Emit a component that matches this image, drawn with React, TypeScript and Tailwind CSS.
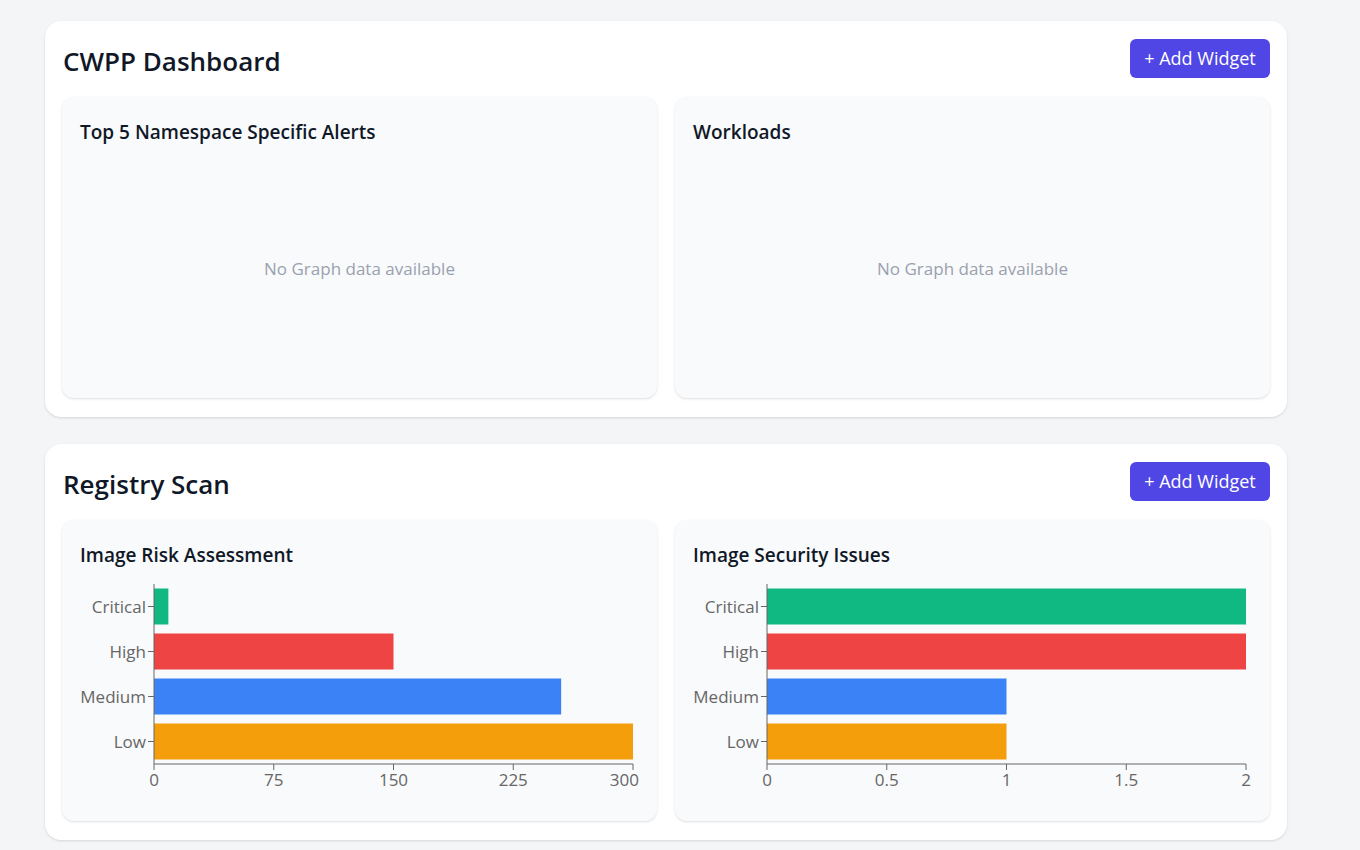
import React from "react";

type Bar = { label: string; value: number; color: string };

const riskData: Bar[] = [
  { label: "Critical", value: 9, color: "#10b981" },
  { label: "High", value: 150, color: "#ef4444" },
  { label: "Medium", value: 255, color: "#3b82f6" },
  { label: "Low", value: 300, color: "#f59e0b" },
];

const issuesData: Bar[] = [
  { label: "Critical", value: 2, color: "#10b981" },
  { label: "High", value: 2, color: "#ef4444" },
  { label: "Medium", value: 1, color: "#3b82f6" },
  { label: "Low", value: 1, color: "#f59e0b" },
];

function HBarChart({ data, max, ticks }: { data: Bar[]; max: number; ticks: number[] }) {
  const W = 559;
  const H = 234;
  const x0 = 74;
  const x1 = 553;
  const y0 = 15;
  const y1 = 195;
  const band = (y1 - y0) / data.length;
  const sx = (v: number) => x0 + ((x1 - x0) * v) / max;

  return (
    <svg width={W} height={H} className="block overflow-visible">
      {data.map((d, i) => {
        const top = y0 + i * band + band * 0.1;
        const h = band * 0.8;
        return (
          <g key={d.label}>
            <rect x={x0} y={top} width={sx(d.value) - x0} height={h} fill={d.color} />
            <line x1={x0 - 6} x2={x0} y1={top + h / 2} y2={top + h / 2} stroke="#666" />
            <text x={x0 - 8} y={top + h / 2} dy="0.36em" textAnchor="end" fill="#666" fontSize="17">
              {d.label}
            </text>
          </g>
        );
      })}
      <line x1={x0} x2={x0} y1={y0} y2={y1} stroke="#666" />
      <line x1={x0} x2={x1} y1={y1} y2={y1} stroke="#666" />
      {ticks.map((t) => {
        // keep the last label inside the chart box, like recharts does
        const half = (String(t).length * 9.5) / 2;
        const overflow = sx(t) + half > W;
        return (
          <g key={t}>
            <line x1={sx(t)} x2={sx(t)} y1={y1} y2={y1 + 6} stroke="#666" />
            <text
              x={overflow ? W : sx(t)}
              y={y1 + 10}
              dy="0.71em"
              textAnchor={overflow ? "end" : "middle"}
              fill="#666"
              fontSize="17"
            >
              {t}
            </text>
          </g>
        );
      })}
    </svg>
  );
}

function Widget({ title, children }: { title: string; children?: React.ReactNode }) {
  return (
    <div className="h-[301px] bg-[#f9fafb] rounded-xl shadow-sm p-[18px] flex flex-col">
      <h3 className="mt-[3px] text-[19px] font-semibold text-gray-900 leading-7">{title}</h3>
      {children ?? (
        <div className="flex-1 flex items-center justify-center text-[17px] text-gray-400 pt-[12px]">
          No Graph data available
        </div>
      )}
    </div>
  );
}

function Section({ title, children }: { title: string; children: React.ReactNode }) {
  return (
    <div className="bg-white rounded-2xl shadow-sm px-[17px] pt-[18px] pb-[19px]">
      <div className="flex items-center justify-between mb-[19px]">
        <h2 className="pt-[4px] text-[26px] leading-8 font-semibold text-gray-900 pl-px">{title}</h2>
        <button className="bg-[#4f46e5] text-white rounded-md h-[39px] w-[140px] text-[18px]">
          + Add Widget
        </button>
      </div>
      <div className="grid grid-cols-2 gap-[18px]">{children}</div>
    </div>
  );
}

export default function App() {
  return (
    <div
      className="min-h-screen bg-[#f4f5f7] pt-[21px] pl-[45px]"
      style={{ fontFamily: '"Open Sans", "Noto Sans", sans-serif' }}
    >
      <div className="w-[1242px] flex flex-col gap-[27px]">
        <Section title="CWPP Dashboard">
          <Widget title="Top 5 Namespace Specific Alerts" />
          <Widget title="Workloads" />
        </Section>
        <Section title="Registry Scan">
          <Widget title="Image Risk Assessment">
            <HBarChart data={riskData} max={300} ticks={[0, 75, 150, 225, 300]} />
          </Widget>
          <Widget title="Image Security Issues">
            <HBarChart data={issuesData} max={2} ticks={[0, 0.5, 1, 1.5, 2]} />
          </Widget>
        </Section>
      </div>
    </div>
  );
}
